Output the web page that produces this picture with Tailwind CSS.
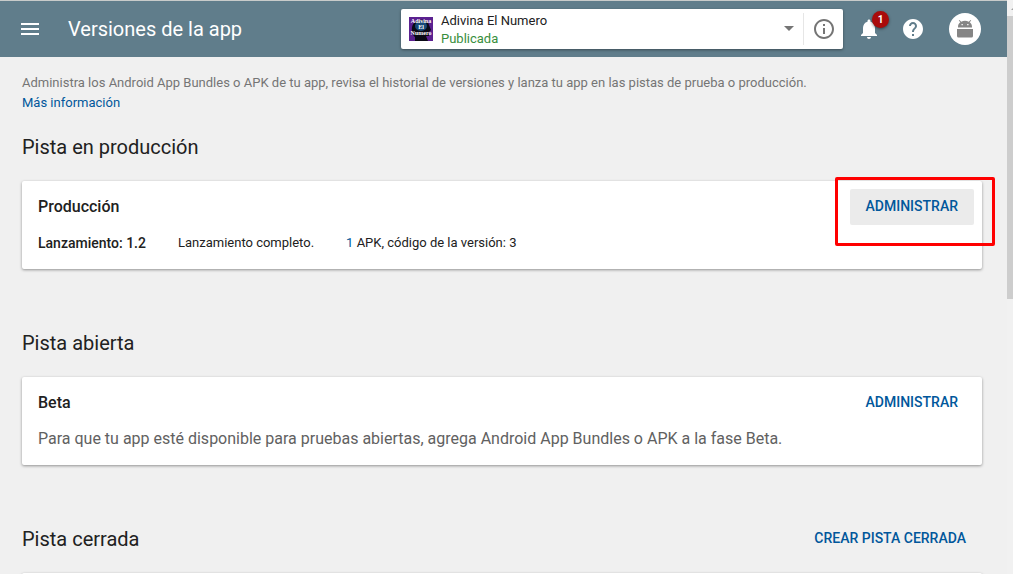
<!DOCTYPE html>
<html lang="es">
<head>
<meta charset="utf-8">
<meta name="viewport" content="width=device-width, initial-scale=1">
<title>Versiones de la app</title>
<script src="https://cdn.jsdelivr.net/npm/@tailwindcss/browser@4"></script>
</head>
<body class="flex h-screen overflow-hidden bg-[#f0f0f0] font-[Roboto,sans-serif] text-[#212121]">
  <div class="flex min-w-0 flex-1 flex-col border-t border-[#c8cbca]">
    <header class="flex h-14 shrink-0 items-center bg-[#607d8b] pr-[26px] pl-[18px] text-white">
      <button type="button" aria-label="Menú" class="mr-[26px] size-6">
        <svg viewBox="0 0 24 24" class="size-6" fill="currentColor"><path d="M3 18h18v-2H3v2zm0-5h18v-2H3v2zm0-7v2h18V6H3z"/></svg>
      </button>
      <h1 class="flex-1 text-xl">Versiones de la app</h1>
      <div class="flex h-10 w-[442px] items-center rounded-xs bg-white shadow-[0_1px_3px_rgba(0,0,0,0.4)]">
        <button type="button" class="flex h-10 flex-1 items-center pl-2 text-left">
          <svg viewBox="0 0 24 24" class="mr-2 size-6" role="img" aria-label="Adivina El Numero">
            <rect width="24" height="24" fill="#5b2190"/>
            <path d="M6 24v-4C2 17 2 9 5 6c4-5 14-4 15 2l2 5-2 2v4h-3l2 5z" fill="#0a0a16"/>
            <ellipse cx="12" cy="9" rx="6" ry="5" fill="#174a78"/>
            <g fill="#fff" font-family="Liberation Serif, serif" font-weight="700" font-size="6" text-anchor="middle"><text x="12" y="6">Adivina</text><text x="12" y="12">El</text><text x="12" y="18">Numero</text></g>
          </svg>
          <span class="flex flex-1 flex-col pt-[2px] text-[13px] leading-[18px]">
            <span class="text-[#212121]">Adivina El Numero</span>
            <span class="text-[#388e3c]">Publicada</span>
          </span>
          <svg viewBox="0 0 12 6" class="mr-2 h-[6px] w-3" fill="#757575"><path d="M1 0h10L6 5z"/></svg>
        </button>
        <button type="button" aria-label="Información" class="flex h-8 w-10 items-center justify-center border-l border-[#e6e6e6] text-[#757575]">
          <svg viewBox="0 0 24 24" class="size-6" fill="currentColor"><path d="M11 17h2v-6h-2v6zm1-15C6.480 2 2 6.480 2 12s4.480 10 10 10 10-4.480 10-10S17.520 2 12 2zm0 18c-4.410 0-8-3.590-8-8s3.590-8 8-8 8 3.590 8 8-3.590 8-8 8zM11 9h2V7h-2v2z"/></svg>
        </button>
      </div>
      <button type="button" aria-label="Notificaciones" class="relative ml-[14px] size-6">
        <svg viewBox="0 0 24 24" class="size-6" fill="currentColor"><path d="M12 22c1.100 0 2-.9 2-2h-4c0 1.100.890 2 2 2zm6-6v-5c0-3.070-1.640-5.640-4.500-6.320V4c0-.830-.670-1.500-1.500-1.500s-1.500.670-1.500 1.500v.680C7.630 5.360 6 7.920 6 11v5l-2 2v1h16v-1l-2-2z"/></svg>
        <span class="absolute -top-[6px] left-[15px] flex size-[17px] items-center justify-center rounded-full bg-[#a90b0b] text-[10px] font-bold shadow-[0_1px_3px_rgba(0,0,0,0.5)]">1</span>
      </button>
      <button type="button" aria-label="Ayuda" class="ml-5 size-6">
        <svg viewBox="0 0 24 24" class="size-6" fill="currentColor"><path d="M12 2C6.480 2 2 6.480 2 12s4.480 10 10 10 10-4.480 10-10S17.520 2 12 2zm1 17h-2v-2h2v2zm2.070-7.750l-.9.920C13.450 12.900 13 13.500 13 15h-2v-.5c0-1.100.450-2.100 1.170-2.830l1.240-1.260c.370-.360.590-.860.590-1.410 0-1.100-.9-2-2-2s-2 .9-2 2H8c0-2.210 1.790-4 4-4s4 1.790 4 4c0 .880-.360 1.680-.930 2.250z"/></svg>
      </button>
      <button type="button" aria-label="Cuenta" class="ml-6 flex size-8 items-center justify-center rounded-full bg-white">
        <svg viewBox="0 0 16 18" class="h-[18px] w-4" fill="#858585"><path fill-rule="evenodd" d="M1 7.500V7c0-2 .7-3.700 2.300-4.700L1.800.6 2.500 0l1.700 1.800a8 8 0 0 1 7.600 0L13.500 0l.7.6-1.500 1.700C14.300 3.300 15 5 15 7v.5zM4.500 4v1.300h1.300V4zm5.700 0v1.300h1.300V4zM0 9h16v7q0 1.500-1.500 1.500h-13Q0 17.500 0 16z"/></svg>
      </button>
    </header>

    <main class="min-h-0 flex-1 overflow-hidden pt-4 pr-[25px] pl-[22px]">
      <p class="text-[13px] leading-5 text-[#757575]">Administra los Android App Bundles o APK de tu app, revisa el historial de versiones y lanza tu app en las pistas de prueba o producción.<br><a href="#" class="text-[#01579b]">Más información</a></p>

      <section class="mt-4">
        <div class="flex h-9 items-center"><h2 class="text-xl">Pista en producción</h2></div>
        <div class="mt-4 rounded-xs bg-white pt-2 pr-2 pb-4 pl-4 shadow-[0_1px_3px_rgba(0,0,0,0.4)]">
          <div class="flex items-center justify-between">
            <h3 class="text-base font-medium">Producción</h3>
            <div class="relative">
              <button type="button" class="block h-9 rounded-xs bg-[#ebebeb] px-4 pb-[2px] text-sm font-medium text-[#01579b]">ADMINISTRAR</button>
              <div class="pointer-events-none absolute -top-3 -right-[21px] -bottom-[21px] -left-[15px] rounded-xs border-3 border-[#ff0000]"></div>
            </div>
          </div>
          <div class="mt-2 flex items-center gap-8 text-[13px] leading-5">
            <span class="text-sm leading-5 font-medium">Lanzamiento: 1.2</span>
            <span>Lanzamiento completo.</span>
            <span><a href="#" class="text-[#01579b]">1</a> APK, código de la versión: 3</span>
          </div>
        </div>
      </section>

      <section class="mt-14">
        <div class="flex h-9 items-center"><h2 class="text-xl">Pista abierta</h2></div>
        <div class="mt-4 rounded-xs bg-white pt-2 pr-2 pb-4 pl-4 shadow-[0_1px_3px_rgba(0,0,0,0.4)]">
          <div class="flex items-center justify-between">
            <h3 class="text-base font-medium">Beta</h3>
            <button type="button" class="h-9 rounded-xs px-4 pb-[2px] text-sm font-medium text-[#01579b]">ADMINISTRAR</button>
          </div>
          <p class="mt-2 text-base leading-5 text-[#616161]">Para que tu app esté disponible para pruebas abiertas, agrega Android App Bundles o APK a la fase Beta.</p>
        </div>
      </section>

      <section class="mt-14">
        <div class="flex h-9 items-center justify-between">
          <h2 class="text-xl">Pista cerrada</h2>
          <button type="button" class="h-9 px-4 pb-[2px] text-sm font-medium text-[#01579b]">CREAR PISTA CERRADA</button>
        </div>
        <div class="mt-4 h-22 rounded-xs bg-white shadow-[0_1px_3px_rgba(0,0,0,0.4)]"></div>
      </section>
    </main>
  </div>
  <div class="flex w-[6px] shrink-0 flex-col overflow-hidden bg-[#f1f1f1]" aria-hidden="true">
    <svg viewBox="0 0 6 16" class="h-4 w-[6px] shrink-0" fill="#a3a3a3"><path d="M4 10l4-4v4z"/></svg>
    <div class="h-[283px] bg-[#cdcdcd]"></div>
  </div>
</body>
</html>
